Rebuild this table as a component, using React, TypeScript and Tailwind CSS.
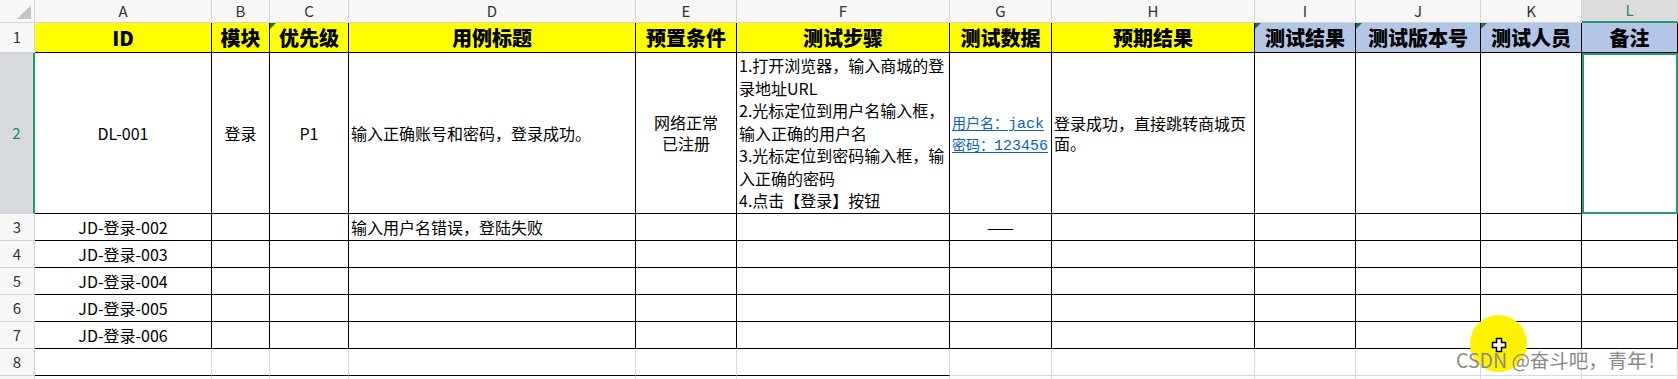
import React from 'react';

const font = "font-['Noto_Sans_CJK_SC','Noto_Sans',sans-serif]";

const colLetters = ['A', 'B', 'C', 'D', 'E', 'F', 'G', 'H', 'I', 'J', 'K', 'L'];

const headers = [
  { label: 'ID', bg: 'bg-[#ffff00]' },
  { label: '模块', bg: 'bg-[#ffff00]' },
  { label: '优先级', bg: 'bg-[#ffff00]', flag: true },
  { label: '用例标题', bg: 'bg-[#ffff00]' },
  { label: '预置条件', bg: 'bg-[#ffff00]' },
  { label: '测试步骤', bg: 'bg-[#ffff00]' },
  { label: '测试数据', bg: 'bg-[#ffff00]' },
  { label: '预期结果', bg: 'bg-[#ffff00]' },
  { label: '测试结果', bg: 'bg-[#b4c6e7]', flag: true },
  { label: '测试版本号', bg: 'bg-[#b4c6e7]', flag: true },
  { label: '测试人员', bg: 'bg-[#b4c6e7]', flag: true },
  { label: '备注', bg: 'bg-[#b4c6e7]' },
];

const steps = [
  '1.打开浏览器，输入商城的登',
  '录地址URL',
  '2.光标定位到用户名输入框，',
  '输入正确的用户名',
  '3.光标定位到密码输入框，输',
  '入正确的密码',
  '4.点击【登录】按钮',
];

const simpleRows = [
  { n: 3, id: 'JD-登录-002', title: '输入用户名错误，登陆失败', data: '——' },
  { n: 4, id: 'JD-登录-003' },
  { n: 5, id: 'JD-登录-004' },
  { n: 6, id: 'JD-登录-005' },
  { n: 7, id: 'JD-登录-006' },
];

function RowHead({ n, selected }: { n: number | string; selected?: boolean }) {
  return (
    <div
      className={
        selected
          ? 'flex items-center justify-center border-b border-r-2 border-b-[#d4d4d4] border-r-[#1f9d6f] bg-[#d6d9de] text-[15px] text-[#1f8a5e]'
          : 'flex items-center justify-center border-b border-r border-[#d4d4d4] bg-[#f7f7f7] text-[15px] text-[#333]'
      }
    >
      {n}
    </div>
  );
}

function Cell({ className = '', children }: { className?: string; children?: React.ReactNode }) {
  return <div className={`border-b border-r border-black text-[16px] ${className}`}>{children}</div>;
}

function Mono({ children }: { children: React.ReactNode }) {
  return <span className="font-['Liberation_Mono',monospace] text-[15px]">{children}</span>;
}

export default function App() {
  return (
    <div className={`relative h-[379px] w-[1678px] overflow-hidden bg-white text-black ${font}`}>
      <div className="grid grid-cols-[35px_177px_58px_79px_287px_101px_213px_102px_203px_101px_125px_101px_96px] grid-rows-[23px_30px_161px_27px_27px_27px_27px_27px_27px_3px]">
        {/* column letters */}
        <div className="relative border-b border-r border-[#d4d4d4] bg-[#f7f7f7]">
          <svg className="absolute bottom-[3px] right-[3px]" width="14" height="14" viewBox="0 0 14 14">
            <polygon points="14,0 14,14 0,14" fill="#c4c4c4" />
          </svg>
        </div>
        {colLetters.map((c) =>
          c === 'L' ? (
            <div
              key={c}
              className="flex items-center justify-center border-b-2 border-r border-b-[#1f9d6f] border-r-[#d4d4d4] bg-[#dcdcdc] text-[15px] text-[#1f8a5e]"
            >
              {c}
            </div>
          ) : (
            <div
              key={c}
              className="flex items-center justify-center border-b border-r border-[#d4d4d4] bg-[#f7f7f7] text-[15px] text-[#333]"
            >
              {c}
            </div>
          )
        )}

        {/* row 1: headers */}
        <RowHead n={1} />
        {headers.map((h) => (
          <div
            key={h.label}
            className={`relative flex items-center justify-center border-b border-r border-black ${h.bg} text-[20px] font-black`}
          >
            {h.flag && (
              <svg className="absolute left-0 top-0" width="6" height="6" viewBox="0 0 6 6">
                <polygon points="0,0 6,0 0,6" fill="#1e7145" />
              </svg>
            )}
            {h.label}
          </div>
        ))}

        {/* row 2 */}
        <RowHead n={2} selected />
        <Cell className="flex items-center justify-center">DL-001</Cell>
        <Cell className="flex items-center justify-center">登录</Cell>
        <Cell className="flex items-center justify-center">P1</Cell>
        <Cell className="flex items-center pl-[2px]">输入正确账号和密码，登录成功。</Cell>
        <Cell className="flex flex-col items-center justify-center leading-[21px]">
          <div>网络正常</div>
          <div>已注册</div>
        </Cell>
        <Cell className="flex flex-col justify-center pl-[2px] leading-[22.6px]">
          {steps.map((s) => (
            <div key={s} className="whitespace-nowrap">
              {s}
            </div>
          ))}
        </Cell>
        <div className="flex flex-col justify-center gap-px border-b border-r border-black pl-[2px] pt-[3px] text-[14px] leading-[19px] text-[#0563c1]">
          <div className="whitespace-nowrap underline decoration-1 underline-offset-2">
            用户名：<Mono>jack</Mono>
          </div>
          <div className="whitespace-nowrap underline decoration-1 underline-offset-2">
            密码：<Mono>123456</Mono>
          </div>
        </div>
        <Cell className="flex flex-col justify-center pl-[2px] leading-[20px]">
          <div className="whitespace-nowrap">登录成功，直接跳转商城页</div>
          <div>面。</div>
        </Cell>
        <Cell />
        <Cell />
        <Cell />
        <div className="border-2 border-[#1f9d6f]" />

        {/* rows 3-7 */}
        {simpleRows.map((r) => (
          <React.Fragment key={r.n}>
            <RowHead n={r.n} />
            <Cell className="flex items-center justify-center">{r.id}</Cell>
            <Cell />
            <Cell />
            <Cell className="flex items-center pl-[2px]">{r.title}</Cell>
            <Cell />
            <Cell />
            <Cell className="flex items-center justify-center">{r.data}</Cell>
            <Cell />
            <Cell />
            <Cell />
            <Cell />
            <Cell />
          </React.Fragment>
        ))}

        {/* row 8 */}
        <RowHead n={8} />
        {colLetters.map((c, i) => (
          <div
            key={c}
            className={
              i < 6
                ? 'border-b border-r border-b-black border-r-[#d9d9d9]'
                : 'border-b border-r border-[#d9d9d9]'
            }
          />
        ))}

        {/* row 9, cut off */}
        <div className="border-r border-[#d4d4d4] bg-[#f7f7f7]" />
        {colLetters.map((c) => (
          <div key={c} className="border-r border-[#d9d9d9]" />
        ))}
      </div>

      {/* cursor highlight */}
      <div className="absolute left-[1470px] top-[315px] h-[57px] w-[57px] rounded-full bg-[#fff200]" />
      <svg className="absolute left-[1491px] top-[337px]" width="16" height="16" viewBox="0 0 16 16">
        <path
          d="M5.5 1.5h5v4h4v5h-4v4h-5v-4h-4v-5h4z"
          fill="#fff"
          stroke="#000"
          strokeWidth="1.5"
          strokeLinejoin="miter"
        />
      </svg>

      {/* watermark */}
      <div className="absolute left-[1456px] top-[347px] whitespace-nowrap text-[19.5px] leading-[26px] text-[#8a8a8a]">
        CSDN @奋斗吧，青年！
      </div>
    </div>
  );
}
